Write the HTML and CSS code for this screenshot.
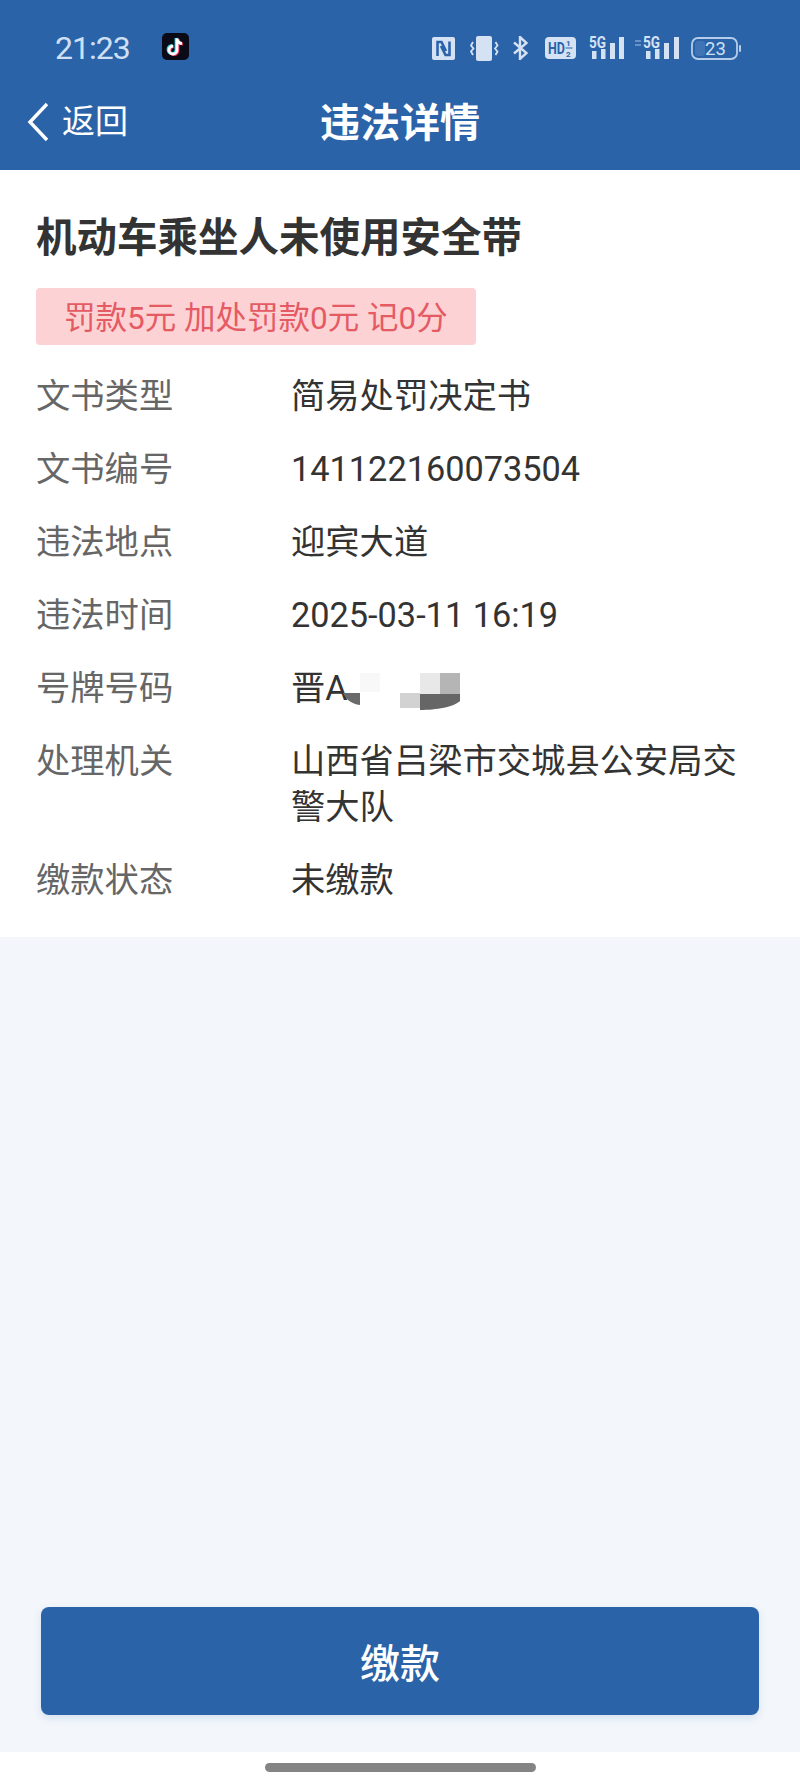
FILE: index.html
```html
<!DOCTYPE html>
<html lang="zh-CN">
<head>
  <meta charset="UTF-8" />
  <meta name="viewport" content="width=device-width, initial-scale=1.0" />
  <title>违法详情</title>
  <link rel="stylesheet" href="styles.css">
</head>
<body>
  <div class="app">
    <header class="header">
      <!-- Status bar -->
      <div class="status-bar">
        <span class="time">21:23</span>
        <svg class="tiktok" viewBox="0 0 27 27" width="27" height="27">
          <rect width="27" height="27" rx="5" fill="#0b0b18"/>
          <path d="M15 5.500v11.500a4 4 0 1 1-4-4M15 5.500c.4 3 2.300 4.800 5 5" fill="none" stroke="#25e0e6" stroke-width="3" transform="translate(-.9 -.5)"/>
          <path d="M15 5.500v11.500a4 4 0 1 1-4-4M15 5.500c.4 3 2.300 4.800 5 5" fill="none" stroke="#f0325a" stroke-width="3" transform="translate(.9 .6)"/>
          <path d="M15 5.500v11.500a4 4 0 1 1-4-4M15 5.500c.4 3 2.300 4.800 5 5" fill="none" stroke="#fff" stroke-width="2.800"/>
        </svg>
        <div class="status-icons">
          <svg class="icon-nfc" viewBox="0 0 23 23" width="23" height="23">
            <rect width="23" height="23" rx="2" fill="#d5e2f3"/>
            <path d="M5.500 19V5h4l4.500 9M17.500 4.500V18h-4L9 9" fill="none" stroke="#2b63a9" stroke-width="2.600"/>
          </svg>
          <svg class="icon-vibrate" viewBox="0 0 29 25" width="29" height="25">
            <rect x="6" width="16" height="25" rx="2" fill="#d5e2f3"/>
            <path d="M3 6 1 9.500 3.500 12.500 1 15.500 3 19M25.500 6l2 3.500-2.500 3 2.500 3-2 3.500" fill="none" stroke="#d5e2f3" stroke-width="1.800"/>
          </svg>
          <svg class="icon-bt" viewBox="0 0 15 24" width="15" height="24">
            <path d="M1 6.500 13.500 17 7 23V1l6.500 6L1 17.500" fill="none" stroke="#d5e2f3" stroke-width="2.400"/>
          </svg>
          <svg class="icon-hd" viewBox="0 0 31 24" width="31" height="24">
            <rect y="1" width="31" height="22" rx="4" fill="#d5e2f3"/>
            <text class="hd" transform="translate(3 18) scale(.78 1)">HD</text>
            <text x="21" y="10" class="hd-small">1</text>
            <rect x="20.500" y="11.500" width="7" height="1" fill="#2b63a9"/>
            <text x="21" y="21" class="hd-small">2</text>
          </svg>
          <svg class="icon-signal" viewBox="0 -4 35 29" width="35" height="29">
            <text x="0" y="12" class="five-g" textLength="17" lengthAdjust="spacingAndGlyphs">5G</text>
            <rect x="3" y="15" width="4.500" height="8" fill="#d5e2f3"/>
            <rect x="12" y="13" width="4.500" height="10" fill="#d5e2f3"/>
            <rect x="21" y="7" width="5" height="16" fill="#d5e2f3"/>
            <rect x="30" y="1" width="5" height="22" fill="#d5e2f3"/>
          </svg>
          <svg class="icon-signal-2" viewBox="0 -4 45 29" width="45" height="29">
            <path d="M1 5h6M1 9h6" stroke="#7fa3d1" stroke-width="1.500"/>
            <text x="9" y="12" class="five-g" textLength="17" lengthAdjust="spacingAndGlyphs">5G</text>
            <rect x="12" y="15" width="4.500" height="8" fill="#d5e2f3"/>
            <rect x="21" y="13" width="4.500" height="10" fill="#d5e2f3"/>
            <rect x="30" y="7" width="5" height="16" fill="#d5e2f3"/>
            <rect x="40" y="1" width="5" height="22" fill="#d5e2f3"/>
          </svg>
          <svg class="icon-battery" viewBox="0 0 50 23" width="50" height="23">
            <rect x="1" y="1" width="45" height="21" rx="6" fill="none" stroke="#b5cdea" stroke-width="1.800"/>
            <rect x="4" y="4" width="10" height="15" rx="3" fill="#3f74b5"/>
            <rect x="48" y="8" width="2" height="7" rx="1" fill="#b5cdea"/>
            <text x="14" y="18" class="battery">23</text>
          </svg>
        </div>
      </div>

      <!-- Nav bar -->
      <div class="nav-bar">
        <div class="back">
          <svg viewBox="0 0 22 40" width="22" height="40">
            <path d="M20 2 3 20l17 18" fill="none" stroke="#fff" stroke-width="3.400"/>
          </svg>
          <span>返回</span>
        </div>
        <h1 class="nav-title">违法详情</h1>
      </div>
    </header>

    <!-- Violation details -->
    <section class="detail">
      <h2 class="detail-title">机动车乘坐人未使用安全带</h2>
      <div class="fine">罚款5元 加处罚款0元 记0分</div>
      <div class="rows">
        <div class="row"><span class="label">文书类型</span><span class="value">简易处罚决定书</span></div>
        <div class="row"><span class="label">文书编号</span><span class="value">141122160073504</span></div>
        <div class="row"><span class="label">违法地点</span><span class="value">迎宾大道</span></div>
        <div class="row"><span class="label">违法时间</span><span class="value">2025-03-11 16:19</span></div>
        <div class="row">
          <span class="label">号牌号码</span>
          <span class="value plate">晋A
            <svg class="mosaic" viewBox="0 0 117 37" width="117" height="37">
              <rect x="17" width="20" height="19" fill="#f8f8f8"/>
              <path d="M0 20h17v12C8 31 3 26 0 20Z" fill="#6a6a6a"/>
              <rect x="57" y="20" width="20" height="15" fill="#d2d2d2"/>
              <rect x="77" width="20" height="21" fill="#e8e8e8"/>
              <rect x="97" width="20" height="21" fill="#b5b5b5"/>
              <path d="M77 21h40v7c-6 6-24 9-40 9Z" fill="#666"/>
            </svg>
          </span>
        </div>
        <div class="row"><span class="label">处理机关</span><span class="value">山西省吕梁市交城县公安局交警大队</span></div>
        <div class="row"><span class="label">缴款状态</span><span class="value">未缴款</span></div>
      </div>
    </section>

    <!-- Pay button -->
    <div class="pay-area">
      <button class="pay-btn">缴款</button>
    </div>

    <footer class="home-bar">
      <div class="home-pill"></div>
    </footer>
  </div>
</body>
</html>
```

FILE: styles.css
```css
* {
  box-sizing: border-box;
}
body {
  margin: 0;
  font-family: Roboto, "Noto Sans CJK SC", sans-serif;
  background-color: #f3f7fb;
}
.app {
  display: flex;
  flex-direction: column;
  height: 1788px;
}
.header {
  height: 170px;
  background-color: #2b63a9;
  color: white;
}
.status-bar {
  display: flex;
  align-items: center;
  height: 96px;
  padding: 0 59px 0 55px;
}
.time {
  font-size: 32px;
  letter-spacing: -1px;
  color: #cfe0f5;
  width: 107px;
}
.tiktok {
  margin-bottom: 4px;
}
.status-icons {
  display: flex;
  align-items: center;
  margin-left: auto;
}
.status-icons svg {
  display: block;
}
.icon-vibrate {
  margin-left: 15px;
}
.icon-bt {
  margin-left: 14px;
}
.icon-hd {
  margin-left: 17px;
}
.icon-signal {
  margin: -4px 0 0 13px;
}
.icon-signal-2 {
  margin: -4px 0 0 10px;
}
.icon-battery {
  margin-left: 12px;
}
.hd {
  font: bold 16px Roboto, sans-serif;
  fill: #2b63a9;
}
.hd-small {
  font: bold 8px Roboto, sans-serif;
  fill: #2b63a9;
}
.five-g {
  font: bold 16px Roboto, sans-serif;
  fill: #d5e2f3;
}
.battery {
  font: 18.500px Roboto, sans-serif;
  fill: #cfe0f5;
}
.nav-bar {
  position: relative;
  display: flex;
  align-items: center;
  justify-content: center;
  height: 48px;
}
.back {
  position: absolute;
  left: 27px;
  top: 6px;
  display: flex;
  align-items: center;
  gap: 13px;
  font-size: 33px;
  line-height: 40px;
}
.nav-title {
  margin: 0;
  font-size: 40px;
  font-weight: 700;
}
.detail {
  height: 767px;
  padding: 42px 36px 0;
  background: white;
  color: #333;
}
.detail-title {
  margin: 0;
  font-size: 40.500px;
  line-height: 52px;
  font-weight: 700;
}
.fine {
  width: 440px;
  height: 57px;
  margin-top: 24px;
  padding-left: 28px;
  border-radius: 4px;
  background-color: #fdd2d4;
  color: #e45b64;
  font-size: 31.500px;
  line-height: 62px;
  white-space: nowrap;
}
.rows {
  display: flex;
  flex-direction: column;
  gap: 27px;
  margin-top: 28px;
  font-size: 34.300px;
  line-height: 46px;
}
.row {
  display: flex;
}
.label {
  flex: 0 0 255px;
  color: #666;
}
.value {
  flex: 1;
  color: #333;
}
.plate {
  white-space: nowrap;
}
.mosaic {
  vertical-align: -10px;
  margin-left: -13px;
}
.pay-area {
  flex: 1;
  display: flex;
  align-items: flex-end;
  padding: 0 41px 37px;
}
.pay-btn {
  width: 100%;
  height: 108px;
  border: none;
  border-radius: 8px;
  background-color: #2b63a9;
  color: white;
  font-family: inherit;
  font-size: 40px;
  font-weight: 500;
  box-shadow: 0 3px 8px rgba(43, 99, 169, 0.15);
}
.home-bar {
  height: 36px;
  padding-top: 11px;
  background: white;
}
.home-pill {
  width: 271px;
  height: 9px;
  margin: 0 auto;
  border-radius: 5px;
  background-color: #848484;
}
```
